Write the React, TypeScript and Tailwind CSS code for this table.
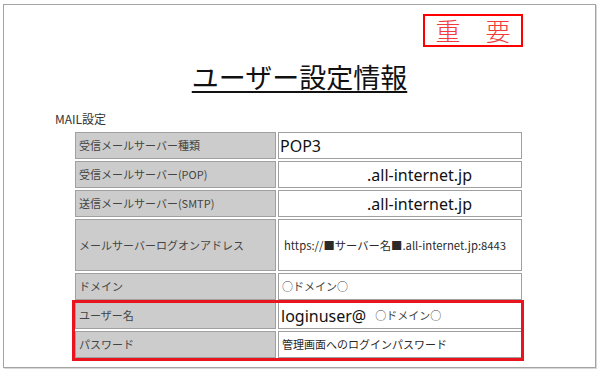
import { Fragment } from "react";

const jp = "font-['Noto_Sans_CJK_JP',sans-serif]";
const latin = "font-['Noto_Sans','Noto_Sans_CJK_JP',sans-serif]";

type Row = { label: string; h: string; value: React.ReactNode };

const rows: Row[] = [
  {
    label: "受信メールサーバー種類",
    h: "h-[27px]",
    value: <span className={`${latin} pl-[1px] text-[16px] text-[#111]`}>POP3</span>,
  },
  {
    label: "受信メールサーバー(POP)",
    h: "h-[27px]",
    value: <span className={`${latin} pl-[88px] text-[16px] text-[#111]`}>.all-internet.jp</span>,
  },
  {
    label: "送信メールサーバー(SMTP)",
    h: "h-[27px]",
    value: <span className={`${latin} pl-[88px] text-[16px] text-[#111]`}>.all-internet.jp</span>,
  },
  {
    label: "メールサーバーログオンアドレス",
    h: "h-[52px]",
    value: (
      <span className={`${jp} pl-[5px] text-[11.3px] text-[#2a2a2a]`}>
        https://■サーバー名■.all-internet.jp:8443
      </span>
    ),
  },
  {
    label: "ドメイン",
    h: "h-[27px]",
    value: <span className={`${jp} pl-[3px] text-[11px] text-[#444]`}>○ドメイン○</span>,
  },
  {
    label: "ユーザー名",
    h: "h-[27px]",
    value: (
      <span className="flex items-center pl-[2px]">
        <span className={`${latin} text-[16px] text-[#111]`}>loginuser@</span>
        <span className={`${jp} ml-[9px] text-[11px] text-[#444]`}>○ドメイン○</span>
      </span>
    ),
  },
  {
    label: "パスワード",
    h: "h-[27px]",
    value: <span className={`${jp} pl-[3px] text-[11px] text-[#2a2a2a]`}>管理画面へのログインパスワード</span>,
  },
];

export default function App() {
  return (
    <div className="w-[600px] h-[379px] bg-white overflow-hidden pt-[4px] pl-[3px]">
      <div className="w-[593px] h-[364px] border border-[#a3a3a3] shadow-[1px_1px_0_#d8d8d8] bg-white">
        {/* 重要 stamp */}
        <div className="flex justify-end pt-[9px] pr-[72px]">
          <div className="w-[100px] h-[33px] border-2 border-[#ff0000] flex items-center justify-center">
            <span className={`${jp} text-[25px] leading-none text-[#f23c3c] font-light`}>重　要</span>
          </div>
        </div>

        <h1
          className={`${jp} mt-[12px] text-center text-[27px] leading-[36px] text-[#111] underline decoration-2 underline-offset-[3px]`}
        >
          ユーザー設定情報
        </h1>

        <div className={`${jp} mt-[16px] pl-[51px] text-[12px] leading-[16px] text-[#333]`}>MAIL設定</div>

        <div className="relative ml-[69px] mt-[3px] w-[451px] grid grid-cols-[201px_244px] gap-[2px] p-[2px]">
          {rows.map((r, i) => (
            <Fragment key={i}>
              <div
                className={`${r.h} ${jp} flex items-center pl-[3px] bg-[#cccccc] border border-[#a0a0a0] text-[11px] text-[#444]`}
              >
                {r.label}
              </div>
              <div className={`${r.h} flex items-center bg-white border border-[#a0a0a0]`}>{r.value}</div>
            </Fragment>
          ))}

          {/* highlight around user name / password */}
          <div className="absolute left-[-1px] top-[170px] w-[452px] h-[61px] border-[3px] border-[#e8141e] pointer-events-none" />
        </div>
      </div>
    </div>
  );
}
